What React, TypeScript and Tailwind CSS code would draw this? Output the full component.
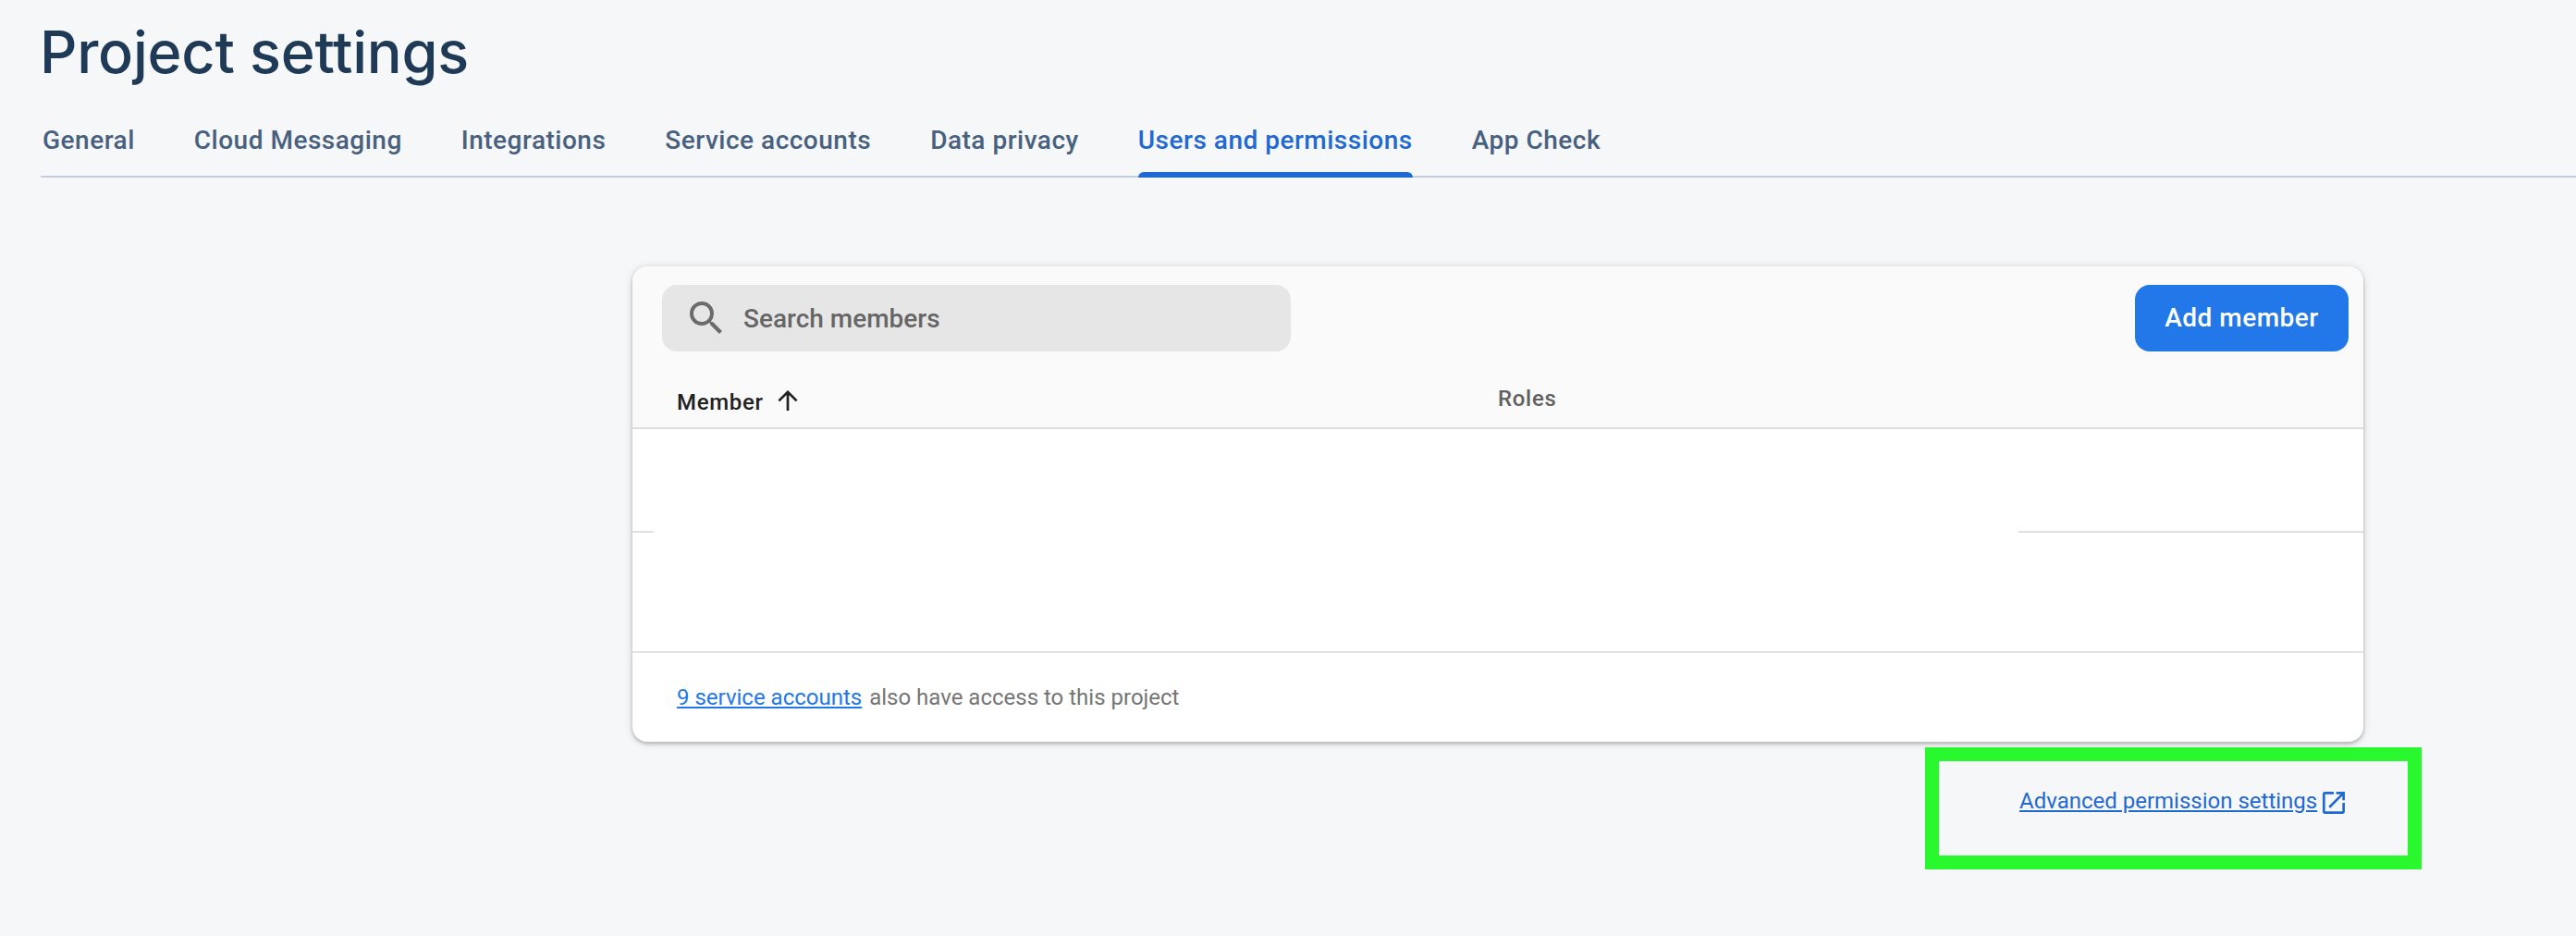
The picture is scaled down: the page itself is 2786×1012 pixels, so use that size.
const tabs = [
  'General',
  'Cloud Messaging',
  'Integrations',
  'Service accounts',
  'Data privacy',
  'Users and permissions',
  'App Check',
];

function SearchIcon() {
  return (
    <svg viewBox="0 0 24 24" className="size-12 shrink-0 fill-[#6b6b6b]">
      <path d="M15.5 14h-.79l-.28-.27A6.471 6.471 0 0 0 16 9.5 6.5 6.5 0 1 0 9.5 16c1.61 0 3.09-.59 4.23-1.57l.27.28v.79l5 4.99L20.49 19l-4.99-5zm-6 0C7.01 14 5 11.99 5 9.5S7.01 5 9.5 5 14 7.01 14 9.5 11.99 14 9.5 14z" />
    </svg>
  );
}

function SortArrow() {
  return (
    <svg viewBox="0 0 22 22" className="-mt-1 ml-[15px] h-[22px] w-[22px] fill-none stroke-[#212121] stroke-[2.7]">
      <path d="M11 22V2.2M1.4 11.4 11 1.8l9.6 9.6" />
    </svg>
  );
}

function OpenInNewIcon() {
  return (
    <svg viewBox="3 3 18 18" className="mt-1 ml-1.5 size-6 shrink-0 fill-[#1f69d2]">
      <path d="M19 19H5V5h7V3H5a2 2 0 0 0-2 2v14a2 2 0 0 0 2 2h14c1.1 0 2-.9 2-2v-7h-2v7zM14 3v2h3.59l-9.83 9.83 1.41 1.41L19 6.41V10h2V3h-7z" />
    </svg>
  );
}

function Tabs() {
  return (
    <nav className="ml-11 flex h-[68px] gap-16 border-b-2 border-[#c3cfdf] pl-0.5 text-[28px] leading-8 font-medium tracking-[0.5px] text-[#48617f]">
      {tabs.map((tab) =>
        tab === 'Users and permissions' ? (
          <a key={tab} className="relative pt-3 whitespace-nowrap text-[#1f69d2]">
            {tab}
            <span className="absolute inset-x-0 -bottom-0.5 h-1.5 rounded-t-md bg-[#1f69d2]" />
          </a>
        ) : (
          <a key={tab} className="pt-3 whitespace-nowrap">
            {tab}
          </a>
        ),
      )}
    </nav>
  );
}

function MembersCard() {
  return (
    <section className="mt-24 ml-[684px] flex h-[514px] w-[1872px] flex-col overflow-hidden rounded-2xl bg-white shadow-[0_2px_4px_0_rgba(0,0,0,0.26),0_1px_12px_0_rgba(0,0,0,0.1)]">
      <header className="h-44 shrink-0 border-b-2 border-[#dedede] bg-[#fafafa]">
        <div className="flex items-center justify-between pt-5 pr-4 pl-8">
          <div className="flex h-[72px] w-[680px] items-center rounded-2xl bg-[#e6e6e6] pl-6">
            <SearchIcon />
            <span className="ml-4 pt-0.5 text-[28px] leading-8 font-medium text-[#666666]">Search members</span>
          </div>
          <button className="h-[72px] w-[231px] rounded-2xl bg-[#2278e8] text-[28px] leading-8 font-medium tracking-[0.5px] text-white">
            Add member
          </button>
        </div>
        <div className="flex items-start pt-[37px] pl-12 text-[24px] leading-7 font-medium tracking-[0.7px]">
          <div className="flex w-[888px] items-center pt-1 text-[#212121]">
            Member
            <SortArrow />
          </div>
          <div className="text-[#616161]">Roles</div>
        </div>
      </header>
      <div className="flex h-28 shrink-0 items-end justify-between">
        <div className="h-0.5 w-[23px] bg-[#e0e0e0]" />
        <div className="h-0.5 w-[373px] bg-[#e0e0e0]" />
      </div>
      <div className="h-[130px] shrink-0 border-b-2 border-[#e2e2e2]" />
      <footer className="flex grow items-center gap-2 pl-12 text-[24px] leading-7 text-[#757575]">
        <a className="text-[#2278e8] underline decoration-2 underline-offset-2">9 service accounts</a>
        <span>also have access to this project</span>
      </footer>
    </section>
  );
}

export default function App() {
  return (
    <main className="h-[1012px] w-[2786px] overflow-hidden bg-[#f6f7f9] font-['Roboto',sans-serif]">
      <h1 className="h-[124px] pt-4 pl-[43px] font-['Inter',sans-serif] text-[63px] leading-[80px] font-medium tracking-[-0.25px] text-[#1e3a57]">
        Project settings
      </h1>
      <Tabs />
      <MembersCard />
      <div className="mt-1.5 ml-[2082px] flex h-[132px] w-[537px] border-[15px] border-[#29f82f] pt-[29px] pl-[87px]">
        <a className="flex h-8 items-start text-[24px] leading-7 whitespace-nowrap text-[#1f69d2]">
          <span className="underline decoration-2 underline-offset-2">Advanced permission settings</span>
          <OpenInNewIcon />
        </a>
      </div>
    </main>
  );
}
